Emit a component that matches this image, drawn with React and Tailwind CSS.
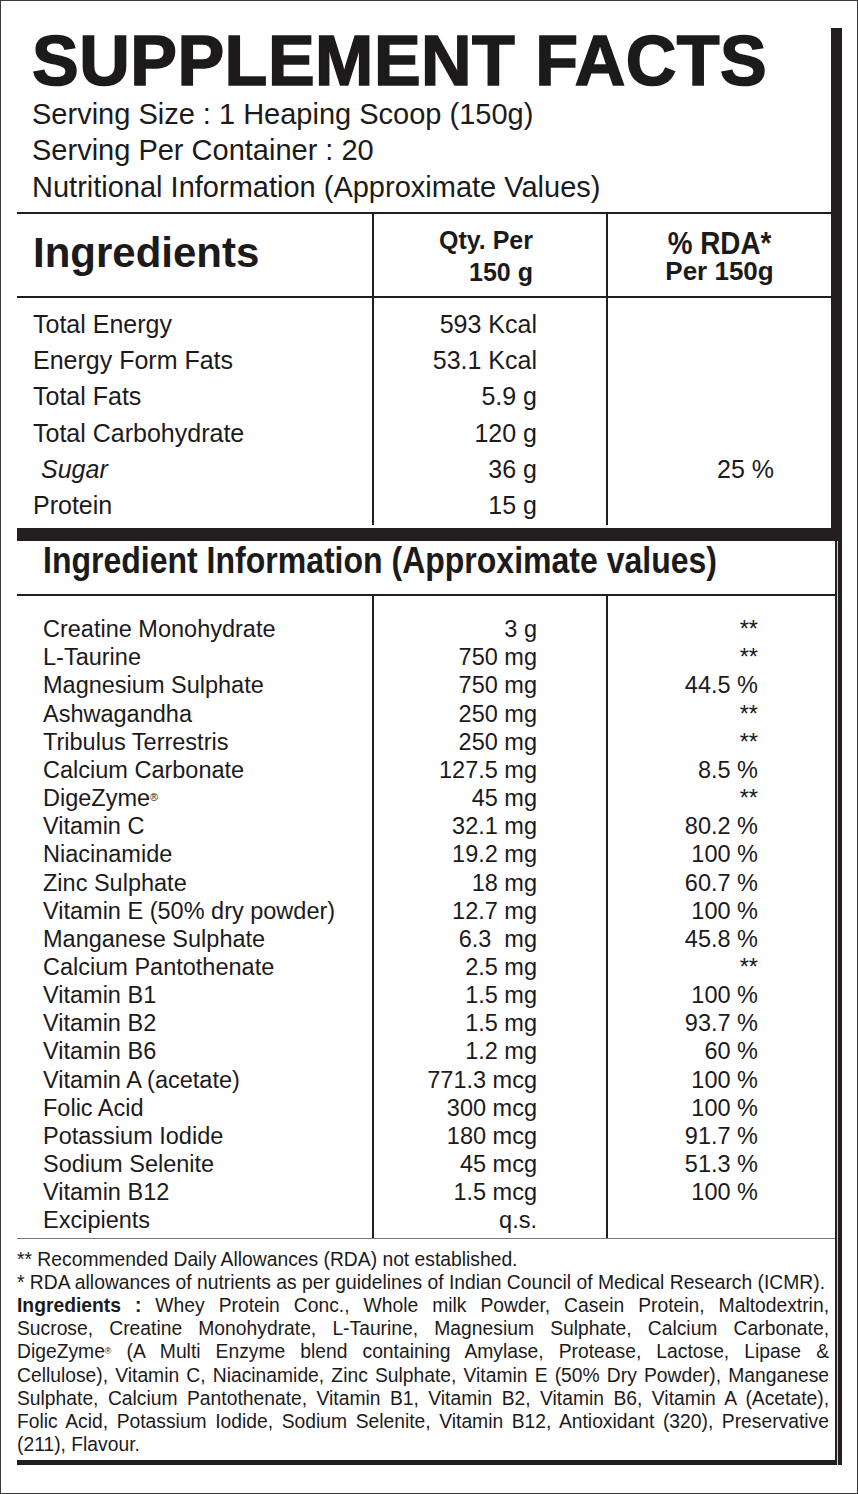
const topRows = [
  { name: 'Total Energy', qty: '593 Kcal' },
  { name: 'Energy Form Fats', qty: '53.1 Kcal' },
  { name: 'Total Fats', qty: '5.9 g' },
  { name: 'Total Carbohydrate', qty: '120 g' },
  { name: 'Sugar', qty: '36 g', rda: '25 %', italic: true },
  { name: 'Protein', qty: '15 g' },
]

const ingredients = [
  ['Creatine Monohydrate', '3 g', '**'],
  ['L-Taurine', '750 mg', '**'],
  ['Magnesium Sulphate', '750 mg', '44.5 %'],
  ['Ashwagandha', '250 mg', '**'],
  ['Tribulus Terrestris', '250 mg', '**'],
  ['Calcium Carbonate', '127.5 mg', '8.5 %'],
  ['DigeZyme', '45 mg', '**'],
  ['Vitamin C', '32.1 mg', '80.2 %'],
  ['Niacinamide', '19.2 mg', '100 %'],
  ['Zinc Sulphate', '18 mg', '60.7 %'],
  ['Vitamin E (50% dry powder)', '12.7 mg', '100 %'],
  ['Manganese Sulphate', '6.3\u00a0\u00a0mg', '45.8 %'],
  ['Calcium Pantothenate', '2.5 mg', '**'],
  ['Vitamin B1', '1.5 mg', '100 %'],
  ['Vitamin B2', '1.5 mg', '93.7 %'],
  ['Vitamin B6', '1.2 mg', '60 %'],
  ['Vitamin A (acetate)', '771.3 mcg', '100 %'],
  ['Folic Acid', '300 mcg', '100 %'],
  ['Potassium Iodide', '180 mcg', '91.7 %'],
  ['Sodium Selenite', '45 mcg', '51.3 %'],
  ['Vitamin B12', '1.5 mcg', '100 %'],
  ['Excipients', 'q.s.', ''],
]

function Justified({ children }) {
  return <div className="text-justify [text-align-last:justify]">{children}</div>
}

export default function App() {
  return (
    <div className="h-[1494px] w-[858px] border border-[#3a3a3a] bg-white pl-[16px] pt-[27px] font-['Liberation_Sans',Arial,sans-serif] text-[#1c1a1b]">
      {/* top block: title + nutrition table */}
      <div className="w-[825px] border-b-[13px] border-r-[11px] border-[#231f20] pb-[3px]">
        <h1 className="pl-[15px] pt-[1px] text-[70px] font-bold leading-[64px] tracking-[0.5px] [-webkit-text-stroke:1.6px_#1c1a1b]">
          SUPPLEMENT FACTS
        </h1>
        <div className="mt-[3px] pl-[15px] text-[29px] leading-[36.3px]">
          <div>Serving Size : 1 Heaping Scoop (150g)</div>
          <div>Serving Per Container : 20</div>
          <div>Nutritional Information (Approximate Values)</div>
        </div>

        <div className="mt-[7px] grid h-[86px] grid-cols-[355px_234px_1fr] border-y-2 border-[#231f20]">
          <div className="pl-[16px] pt-[18px] text-[42px] font-bold leading-[42px]">Ingredients</div>
          <div className="border-l-2 border-[#231f20] pr-[73px] pt-[10px] text-right text-[25px] font-bold leading-[32px]">
            <div>Qty. Per</div>
            <div>150 g</div>
          </div>
          <div className="border-l-2 border-[#231f20] pt-[15px] text-center font-bold">
            <div className="text-[32px] leading-[28px]">
              <span className="inline-block scale-x-[0.87]">% RDA*</span>
            </div>
            <div className="mt-[1px] text-[26px] leading-[26px]">Per 150g</div>
          </div>
        </div>

        <div className="grid grid-cols-[355px_234px_1fr] text-[25px] leading-[36.2px]">
          <div className="pb-[2px] pl-[16px] pt-[8px]">
            {topRows.map((row) => (
              <div className={row.italic ? 'pl-[8px] italic' : ''} key={row.name}>
                {row.name}
              </div>
            ))}
          </div>
          <div className="border-l-2 border-[#231f20] pb-[2px] pr-[69px] pt-[8px] text-right">
            {topRows.map((row) => (
              <div key={row.name}>{row.qty}</div>
            ))}
          </div>
          <div className="border-l-2 border-[#231f20] pb-[2px] pr-[57px] pt-[8px] text-right">
            {topRows.map((row) => (
              <div key={row.name}>{row.rda ?? '\u00a0'}</div>
            ))}
          </div>
        </div>
      </div>

      {/* lower block: ingredient information + footnotes */}
      <div className="w-[820px] border-b-[5px] border-r-2 border-[#231f20] shadow-[1px_0_0_#cfcfcf,5px_0_0_#231f20]">
        <div className="h-[55px] border-b-2 border-[#231f20] pl-[26px] pt-[1px] text-[37px] font-bold leading-[37px]">
          <span className="inline-block origin-left scale-x-[0.865] whitespace-nowrap">
            Ingredient Information (Approximate values)
          </span>
        </div>

        <div className="grid grid-cols-[355px_234px_1fr] border-b border-[#7a7a7a] text-[23.5px] leading-[28.15px]">
          <div className="pb-[3px] pl-[26px] pt-[19px]">
            {ingredients.map(([name]) => (
              <div key={name}>
                {name}
                {name === 'DigeZyme' && <sup className="text-[11px]">®</sup>}
              </div>
            ))}
          </div>
          <div className="border-l-2 border-[#231f20] pb-[3px] pr-[69px] pt-[19px] text-right">
            {ingredients.map(([name, qty]) => (
              <div key={name}>{qty}</div>
            ))}
          </div>
          <div className="border-l-2 border-[#231f20] pb-[3px] pr-[77px] pt-[19px] text-right">
            {ingredients.map(([name, , rda]) => (
              <div key={name}>{rda || '\u00a0'}</div>
            ))}
          </div>
        </div>

        <div className="pb-[4px] pr-[6px] pt-[9px] text-[19.3px] leading-[23.2px]">
          <div>** Recommended Daily Allowances (RDA) not established.</div>
          <div>* RDA allowances of nutrients as per guidelines of Indian Council of Medical Research (ICMR).</div>
          <Justified>
            <b>Ingredients :</b> Whey Protein Conc., Whole milk Powder, Casein Protein, Maltodextrin,
          </Justified>
          <Justified>Sucrose, Creatine Monohydrate, L-Taurine, Magnesium Sulphate, Calcium Carbonate,</Justified>
          <Justified>
            DigeZyme<sup className="text-[9px]">®</sup> (A Multi Enzyme blend containing Amylase, Protease, Lactose, Lipase &amp;
          </Justified>
          <Justified>Cellulose), Vitamin C, Niacinamide, Zinc Sulphate, Vitamin E (50% Dry Powder), Manganese</Justified>
          <Justified>Sulphate, Calcium Pantothenate, Vitamin B1, Vitamin B2, Vitamin B6, Vitamin A (Acetate),</Justified>
          <Justified>Folic Acid, Potassium Iodide, Sodium Selenite, Vitamin B12, Antioxidant (320), Preservative</Justified>
          <div>(211), Flavour.</div>
        </div>
      </div>
    </div>
  )
}
